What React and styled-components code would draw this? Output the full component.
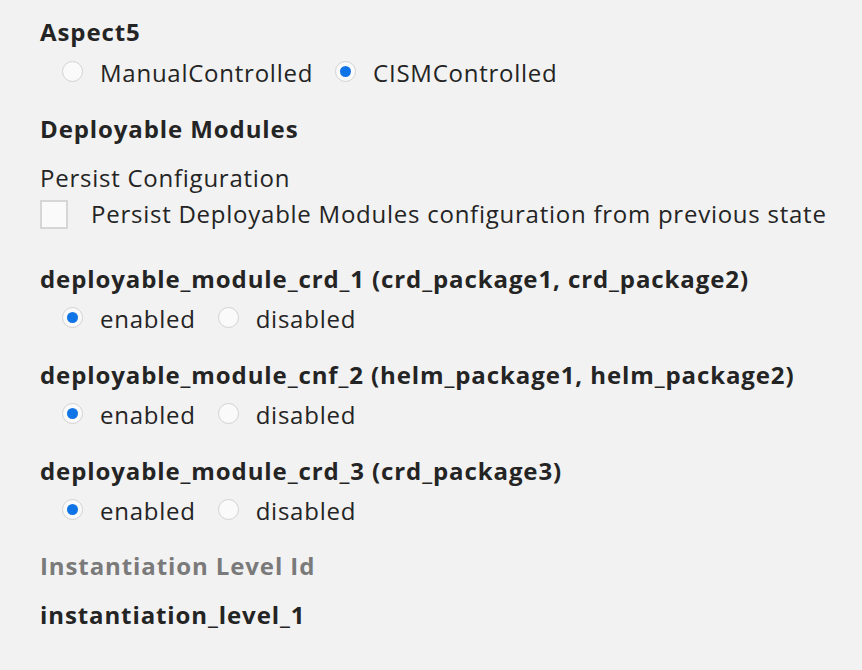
import styled, { createGlobalStyle } from "styled-components";

const GlobalStyle = createGlobalStyle`
  body {
    margin: 0;
    background: #f2f2f2;
    font-family: "Open Sans", "Liberation Sans", sans-serif;
    color: #242424;
  }
`;

const Page = styled.div`
  padding: 16px 0 0 40px;
  font-size: 24px;
  letter-spacing: 0.75px;
`;

const Section = styled.div`
  margin-top: ${(props) => props.gap || 0}px;
`;

const Title = styled.div`
  line-height: 32px;
  font-weight: 700;
  letter-spacing: 0.9px;
  color: ${(props) => (props.muted ? "#7a7a7a" : "#242424")};
  white-space: nowrap;
`;

const SubTitle = styled.div`
  line-height: 32px;
  font-weight: 400;
`;

const RadioRow = styled.div`
  display: flex;
  align-items: center;
  height: 40px;
  margin-top: ${(props) => props.gap || 3}px;
  padding-left: 22px;
`;

const RadioOption = styled.label`
  display: flex;
  align-items: center;
  gap: 17px;
  margin-right: 22px;
  white-space: nowrap;
`;

const RadioDot = styled.span`
  box-sizing: border-box;
  width: 21px;
  height: 21px;
  border-radius: 50%;
  border: 1px solid #d2d2d2;
  background: #fafafa;
  display: flex;
  align-items: center;
  justify-content: center;
  margin-top: -2px;

  &::after {
    content: "";
    width: 11px;
    height: 11px;
    border-radius: 50%;
    background: ${(props) => (props.checked ? "#1174e6" : "transparent")};
  }
`;

const CheckRow = styled.div`
  display: flex;
  align-items: center;
  gap: 23px;
  height: 38px;
  white-space: nowrap;
`;

const CheckBox = styled.span`
  box-sizing: border-box;
  width: 28px;
  height: 29px;
  border: 2px solid #d6d6d6;
  background: #fafafa;
  margin-top: 2px;
`;

function Radio({ label, checked }) {
  return (
    <RadioOption>
      <RadioDot checked={checked} />
      {label}
    </RadioOption>
  );
}

const modules = [
  "deployable_module_crd_1 (crd_package1, crd_package2)",
  "deployable_module_cnf_2 (helm_package1, helm_package2)",
  "deployable_module_crd_3 (crd_package3)",
];

export default function App() {
  return (
    <>
      <GlobalStyle />
      <Page>
        <Section>
          <Title>Aspect5</Title>
          <RadioRow gap={4}>
            <Radio label="ManualControlled" />
            <Radio label="CISMControlled" checked />
          </RadioRow>
        </Section>
        <Section gap={21}>
          <Title>Deployable Modules</Title>
        </Section>
        <Section gap={17}>
          <SubTitle>Persist Configuration</SubTitle>
          <CheckRow>
            <CheckBox />
            Persist Deployable Modules configuration from previous state
          </CheckRow>
        </Section>
        {modules.map((name, ix) => (
          <Section key={name} gap={ix === 0 ? 31 : 21}>
            <Title>{name}</Title>
            <RadioRow>
              <Radio label="enabled" checked />
              <Radio label="disabled" />
            </RadioRow>
          </Section>
        ))}
        <Section gap={20}>
          <Title muted>Instantiation Level Id</Title>
        </Section>
        <Section gap={17}>
          <Title>instantiation_level_1</Title>
        </Section>
      </Page>
    </>
  );
}
